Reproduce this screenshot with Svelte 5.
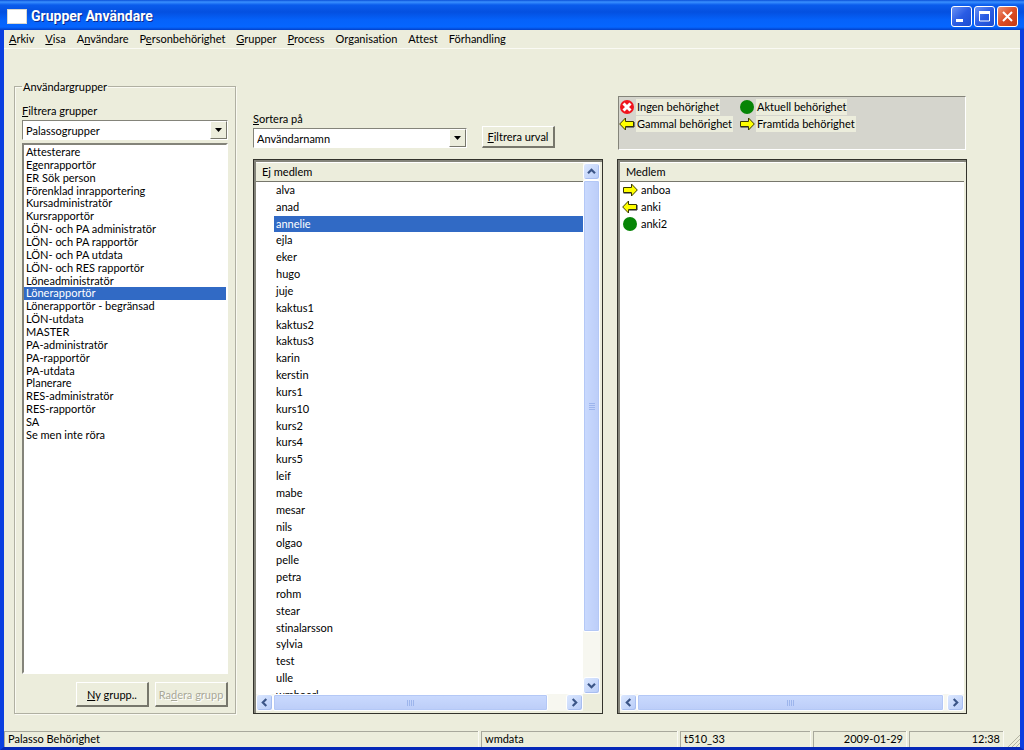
<script lang="ts">
  const menus = [
    "&Arkiv",
    "&Visa",
    "A&nvändare",
    "P&ersonbehörighet",
    "&Grupper",
    "&Process",
    "Organisation",
    "Attest",
    "Förhandling",
  ];

  const groups = [
    "Attesterare",
    "Egenrapportör",
    "ER Sök person",
    "Förenklad inrapportering",
    "Kursadministratör",
    "Kursrapportör",
    "LÖN- och PA administratör",
    "LÖN- och PA rapportör",
    "LÖN- och PA utdata",
    "LÖN- och RES rapportör",
    "Löneadministratör",
    "Lönerapportör",
    "Lönerapportör - begränsad",
    "LÖN-utdata",
    "MASTER",
    "PA-administratör",
    "PA-rapportör",
    "PA-utdata",
    "Planerare",
    "RES-administratör",
    "RES-rapportör",
    "SA",
    "Se men inte röra",
  ];

  const users = [
    "alva", "anad", "annelie", "ejla", "eker", "hugo", "juje", "kaktus1",
    "kaktus2", "kaktus3", "karin", "kerstin", "kurs1", "kurs10", "kurs2",
    "kurs4", "kurs5", "leif", "mabe", "mesar", "nils", "olgao", "pelle",
    "petra", "rohm", "stear", "stinalarsson", "sylvia", "test", "ulle",
    "wmboerl",
  ];

  const members = [
    { name: "anboa", status: "future" },
    { name: "anki", status: "past" },
    { name: "anki2", status: "current" },
  ];

  const legend = [
    { label: "Ingen behörighet", status: "none" },
    { label: "Aktuell behörighet", status: "current" },
    { label: "Gammal behörighet", status: "past" },
    { label: "Framtida behörighet", status: "future" },
  ];

  let group = $state("Lönerapportör");
  let user = $state("annelie");
  let member = $state("");
</script>

{#snippet mnemonic(text: string)}
  {@const i = text.indexOf("&")}
  {#if i < 0}{text}{:else}{text.slice(0, i)}<u>{text[i + 1]}</u>{text.slice(i + 2)}{/if}
{/snippet}

{#snippet statusIcon(status: string)}
  <svg class="status-icon" width="16" height="16" viewBox="0 0 16 16" aria-hidden="true">
    {#if status === "none"}
      <circle cx="8" cy="8" r="7" fill="#f0141c" />
      <path d="M4.500 4.500l7 7M11.500 4.500l-7 7" stroke="#fff" stroke-width="3" />
    {:else if status === "current"}
      <circle cx="8" cy="8" r="7" fill="#068406" />
    {:else if status === "past"}
      <path d="M.7 8L6.500 2v3.500h8v5h-8V14z" fill="#ff0" stroke="#3a3a00" />
      <path d="M7 11h8V6" fill="none" stroke="#222" />
    {:else}
      <path d="M15.300 8L9.500 2v3.500h-8v5h8V14z" fill="#ff0" stroke="#3a3a00" />
      <path d="M1.500 11H9" fill="none" stroke="#222" />
    {/if}
  </svg>
{/snippet}

{#snippet arrow(dir: string, label: string)}
  <button class="scroll-button" aria-label={label}>
    <svg class={dir} width="9" height="9" viewBox="0 0 9 9" aria-hidden="true">
      <path d="M1 6.300L4.500 2.800 8 6.300" fill="none" stroke="#3c5688" stroke-width="2.200" />
    </svg>
  </button>
{/snippet}

{#snippet hscroll()}
  <div class="hscroll">
    {@render arrow("left", "Rulla åt vänster")}
    <div class="track"><div class="thumb"><i></i><i></i><i></i><i></i></div></div>
    {@render arrow("right", "Rulla åt höger")}
  </div>
{/snippet}

{#snippet dropArrow()}
  <span class="drop" aria-hidden="true">
    <svg width="7" height="4" viewBox="0 0 7 4"><path d="M0 0h7L3.500 4z" /></svg>
  </span>
{/snippet}

<div class="window">
  <header class="titlebar">
    <span class="app-icon"></span>
    <h1>Grupper Användare</h1>
    <button class="caption" aria-label="Minimera">
      <svg width="19" height="19" viewBox="0 0 19 19"><path d="M4 12h7v3H4z" fill="#fff" /></svg>
    </button>
    <button class="caption" aria-label="Maximera">
      <svg width="19" height="19" viewBox="0 0 19 19">
        <path d="M4.500 5h10v9h-10z" fill="none" stroke="#fff" />
        <path d="M4 4h11v3H4z" fill="#fff" />
      </svg>
    </button>
    <button class="caption close" aria-label="Stäng">
      <svg width="19" height="19" viewBox="0 0 19 19">
        <path d="M5 5l9 9M14 5l-9 9" stroke="#fff" stroke-width="2" />
      </svg>
    </button>
  </header>

  <nav class="menubar">
    {#each menus as menu}
      <button>{@render mnemonic(menu)}</button>
    {/each}
  </nav>

  <main>
    <fieldset class="groups">
      <legend>Användargrupper</legend>
      <label for="group-filter"><u>F</u>iltrera grupper</label>
      <div class="combo">
        <select id="group-filter"><option>Palassogrupper</option></select>
        {@render dropArrow()}
      </div>
      <ul class="listbox">
        {#each groups as name}
          <li><button class:selected={name === group} onclick={() => (group = name)}>{name}</button></li>
        {/each}
      </ul>
      <div class="actions">
        <button class="push"><u>N</u>y grupp..</button>
        <button class="push" disabled>Ra<u>d</u>era grupp</button>
      </div>
    </fieldset>

    <div class="panes">
      <section>
        <div class="pane-top">
          <div class="sort">
            <label for="sort"><u>S</u>ortera på</label>
            <div class="combo">
              <select id="sort"><option>Användarnamn</option></select>
              {@render dropArrow()}
            </div>
          </div>
          <button class="push"><u>F</u>iltrera urval</button>
        </div>
        <div class="pane">
          <div class="view">
            <div class="content">
              <h2>Ej medlem</h2>
              <ul class="rows indented">
                {#each users as name}
                  <li><button class:selected={name === user} onclick={() => (user = name)}>{name}</button></li>
                {/each}
              </ul>
            </div>
            <div class="vscroll">
              {@render arrow("up", "Rulla uppåt")}
              <div class="track"><div class="thumb"><i></i><i></i><i></i><i></i></div></div>
              {@render arrow("down", "Rulla nedåt")}
            </div>
          </div>
          <div class="corner">{@render hscroll()}</div>
        </div>
      </section>

      <section>
        <div class="pane-top">
          <ul class="legend">
            {#each legend as item}
              <li>{@render statusIcon(item.status)}<span>{item.label}</span></li>
            {/each}
          </ul>
        </div>
        <div class="pane wide">
          <div class="view">
            <div class="content">
              <h2>Medlem</h2>
              <ul class="rows">
                {#each members as item}
                  <li>
                    {@render statusIcon(item.status)}
                    <button class:selected={item.name === member} onclick={() => (member = item.name)}>
                      {item.name}
                    </button>
                  </li>
                {/each}
              </ul>
            </div>
          </div>
          {@render hscroll()}
        </div>
      </section>
    </div>
  </main>

  <footer>
    <span>Palasso Behörighet</span>
    <span>wmdata</span>
    <span>t510_33</span>
    <span class="end">2009-01-29</span>
    <span class="end">12:38</span>
    <svg width="14" height="14" viewBox="0 0 14 14" aria-hidden="true">
      <path d="M2 14L14 2M6 14l8-8M10 14l4-4" stroke="#b4b4a4" />
    </svg>
  </footer>
</div>

<style>
  :global(body) {
    margin: 0;
    background: #0a36c8;
  }

  .window {
    --face: #eceddc;
    --shadow: #84847a;
    --dark: #77776c;
    --select: #316ac5;
    background: var(--face);
    border: solid #0a3fe0;
    border-bottom-color: #0628b8;
    border-width: 0 4px 3px;
    box-sizing: border-box;
    color: #000;
    display: flex;
    flex-direction: column;
    font: 11px/13px Lato, "Liberation Sans", sans-serif;
    font-variant-ligatures: none;
    height: 100vh;
    min-height: 480px;
  }

  button,
  select {
    color: inherit;
    font: inherit;
    font-variant-ligatures: none;
  }

  button {
    background: none;
    border: 0;
    padding: 0;
  }

  ul {
    list-style: none;
    margin: 0;
    padding: 0;
  }

  .titlebar {
    align-items: center;
    background: linear-gradient(#0a4fd8, #3a90ff 2px, #0a5cec 5px, #0450e0 12px, #0562fa 20px, #0566ff 27px, #0340c8);
    box-sizing: border-box;
    display: flex;
    flex: none;
    gap: 2px;
    height: 30px;
    margin: 0 -4px;
    padding: 2px 6px 0 7px;
  }

  .app-icon {
    background: #fff;
    border: 1px solid #d8d8d0;
    box-sizing: border-box;
    height: 15px;
    margin-right: 2px;
    width: 20px;
  }

  h1 {
    color: #fff;
    flex: 1;
    font: bold 14px/18px Roboto, sans-serif;
    margin: 0;
    text-shadow: 1px 1px #0a2a90;
  }

  .caption {
    background: linear-gradient(135deg, #6a92f4, #2a5ce4 50%, #1c4cd0);
    border: 1px solid #fff;
    border-radius: 3px;
    height: 21px;
    width: 21px;
  }

  .caption svg {
    display: block;
  }

  .caption.close {
    background: linear-gradient(135deg, #ee9274, #dc4c24 50%, #c43a14);
  }

  .menubar {
    align-items: flex-start;
    border-bottom: 1px solid #fafaf4;
    display: flex;
    flex: none;
    gap: 11px;
    height: 18px;
    padding: 0 5px;
  }

  .menubar button {
    line-height: 18px;
  }

  main {
    display: grid;
    flex: 1;
    gap: 17px;
    grid-template-columns: 222fr 714fr;
    min-height: 0;
    padding: 31px 53px 17px 10px;
  }

  .groups {
    border: 1px solid #b0b0a2;
    box-shadow: inset 1px 1px #fafaf2, 1px 1px #fafaf2;
    box-sizing: border-box;
    display: flex;
    flex-direction: column;
    margin: 0;
    min-height: 0;
    min-width: 0;
    padding: 11px 7px 6px;
  }

  .groups legend {
    padding: 0 1px;
  }

  .combo {
    border: 1px solid;
    border-color: var(--shadow) #fff #fff var(--shadow);
    display: flex;
    margin-top: 3px;
    position: relative;
  }

  .combo select {
    appearance: none;
    background: #fff;
    border: 0;
    border-radius: 0;
    flex: 1;
    height: 18px;
    padding: 0 18px 0 3px;
  }

  .drop {
    align-items: center;
    background: var(--face);
    border: 1px solid;
    border-color: #fff var(--dark) var(--dark) #fff;
    bottom: 0;
    box-sizing: border-box;
    display: flex;
    justify-content: center;
    pointer-events: none;
    position: absolute;
    right: 0;
    top: 0;
    width: 17px;
  }

  .listbox {
    background: #fff;
    border: 2px solid;
    border-color: var(--shadow) #fff #fff var(--shadow);
    flex: 1;
    margin-top: 3px;
    min-height: 0;
    overflow: hidden;
    padding-top: 1px;
  }

  .listbox button {
    display: block;
    line-height: 1.17;
    padding: 0 2px;
    text-align: left;
    width: 100%;
  }

  .selected {
    background: var(--select);
    color: #fff;
  }

  .actions {
    display: flex;
    gap: 6px;
    justify-content: flex-end;
    margin-top: 8px;
  }

  .push {
    background: var(--face);
    border: solid;
    border-color: #fff var(--dark) var(--dark) #fff;
    border-width: 1px 2px 2px 1px;
    box-sizing: border-box;
    height: 25px;
    white-space: nowrap;
    width: 73px;
  }

  .push:disabled {
    color: #a8a898;
    text-shadow: 1px 1px #fff;
  }

  .panes {
    display: flex;
    gap: 14px;
    min-height: 0;
    min-width: 0;
  }

  section {
    display: flex;
    flex: 1 1 0;
    flex-direction: column;
    min-width: 0;
  }

  .pane-top {
    align-items: flex-end;
    box-sizing: border-box;
    display: flex;
    flex: none;
    gap: 15px;
    height: 79px;
    padding-bottom: 11px;
  }

  .pane-top .push {
    height: 22px;
  }

  .sort {
    width: 214px;
  }

  .legend {
    align-content: start;
    background: #d5d5cd;
    border: 1px solid;
    border-color: var(--shadow) #fff #fff var(--shadow);
    box-sizing: border-box;
    display: grid;
    flex: 1;
    grid-template-columns: 120px 1fr;
    height: 54px;
    margin: 0 1px -2px;
    padding-top: 1px;
  }

  .legend li {
    align-items: center;
    display: flex;
    height: 17px;
  }

  .legend span {
    background: var(--face);
    line-height: 16px;
    padding: 0 1px;
  }

  .pane {
    background: #fff;
    border: 1px solid #33332c;
    box-shadow: inset 2px 2px var(--shadow), inset -2px -2px var(--face);
    box-sizing: border-box;
    display: flex;
    flex: 1;
    flex-direction: column;
    min-height: 0;
    padding: 3px 2px 2px;
  }

  .view {
    display: flex;
    flex: 1;
    min-height: 0;
  }

  .content {
    flex: 1;
    min-width: 0;
    overflow: hidden;
  }

  h2 {
    background: var(--face);
    border-bottom: 1px solid var(--dark);
    font: inherit;
    line-height: 18px;
    margin: 0;
    padding: 0 6px;
  }

  .rows li {
    align-items: center;
    display: flex;
    line-height: 1.53;
    padding-left: 2px;
  }

  .rows button {
    line-height: 1.53;
    padding: 0 2px;
    text-align: left;
  }

  .indented li {
    padding-left: 18px;
  }

  .indented button {
    flex: 1;
  }

  .status-icon {
    flex: none;
    margin-right: 1px;
  }

  .vscroll,
  .hscroll {
    background: #f7f7f0;
    display: flex;
    flex: none;
  }

  .vscroll {
    flex-direction: column;
    width: 17px;
  }

  .hscroll {
    height: 17px;
  }

  .corner {
    background: var(--face);
    padding-right: 17px;
  }

  .scroll-button {
    align-items: center;
    background: linear-gradient(135deg, #dce8ff, #b8ccf8);
    border: 1px solid #fff;
    border-radius: 3px;
    box-shadow: inset -1px -1px #a8bef0;
    display: flex;
    flex: none;
    height: 17px;
    justify-content: center;
    width: 17px;
  }

  .left {
    transform: rotate(-90deg);
  }

  .right {
    transform: rotate(90deg);
  }

  .down {
    transform: rotate(180deg);
  }

  .track {
    display: flex;
    flex: 1;
  }

  .vscroll .track {
    flex-direction: column;
  }

  .thumb {
    align-items: center;
    background: linear-gradient(#cadafe, #bccdf8);
    border: 1px solid #fff;
    border-radius: 2px;
    box-shadow: inset 0 0 0 1px #b4c8f6;
    box-sizing: border-box;
    display: flex;
    gap: 1px;
    justify-content: center;
    width: 94%;
  }

  .vscroll .thumb {
    background: linear-gradient(90deg, #cadafe, #bccdf8);
    flex-direction: column;
    height: 91%;
    width: 100%;
  }

  .wide .thumb {
    width: 99%;
  }

  .thumb i {
    background: #9db5ec;
    height: 6px;
    width: 1px;
  }

  .vscroll i {
    height: 1px;
    width: 6px;
  }

  footer {
    display: grid;
    flex: none;
    gap: 3px;
    grid-template-columns: 474fr 196fr 130fr 93fr 94fr 14px;
    height: 16px;
  }

  footer span {
    border: solid #a8a89c;
    border-width: 1px 0 0 1px;
    box-shadow: 1px 0 #fafaf4;
    line-height: 14px;
    padding: 0 3px;
    white-space: nowrap;
  }

  footer svg {
    align-self: end;
  }

  .end {
    text-align: right;
  }
</style>
